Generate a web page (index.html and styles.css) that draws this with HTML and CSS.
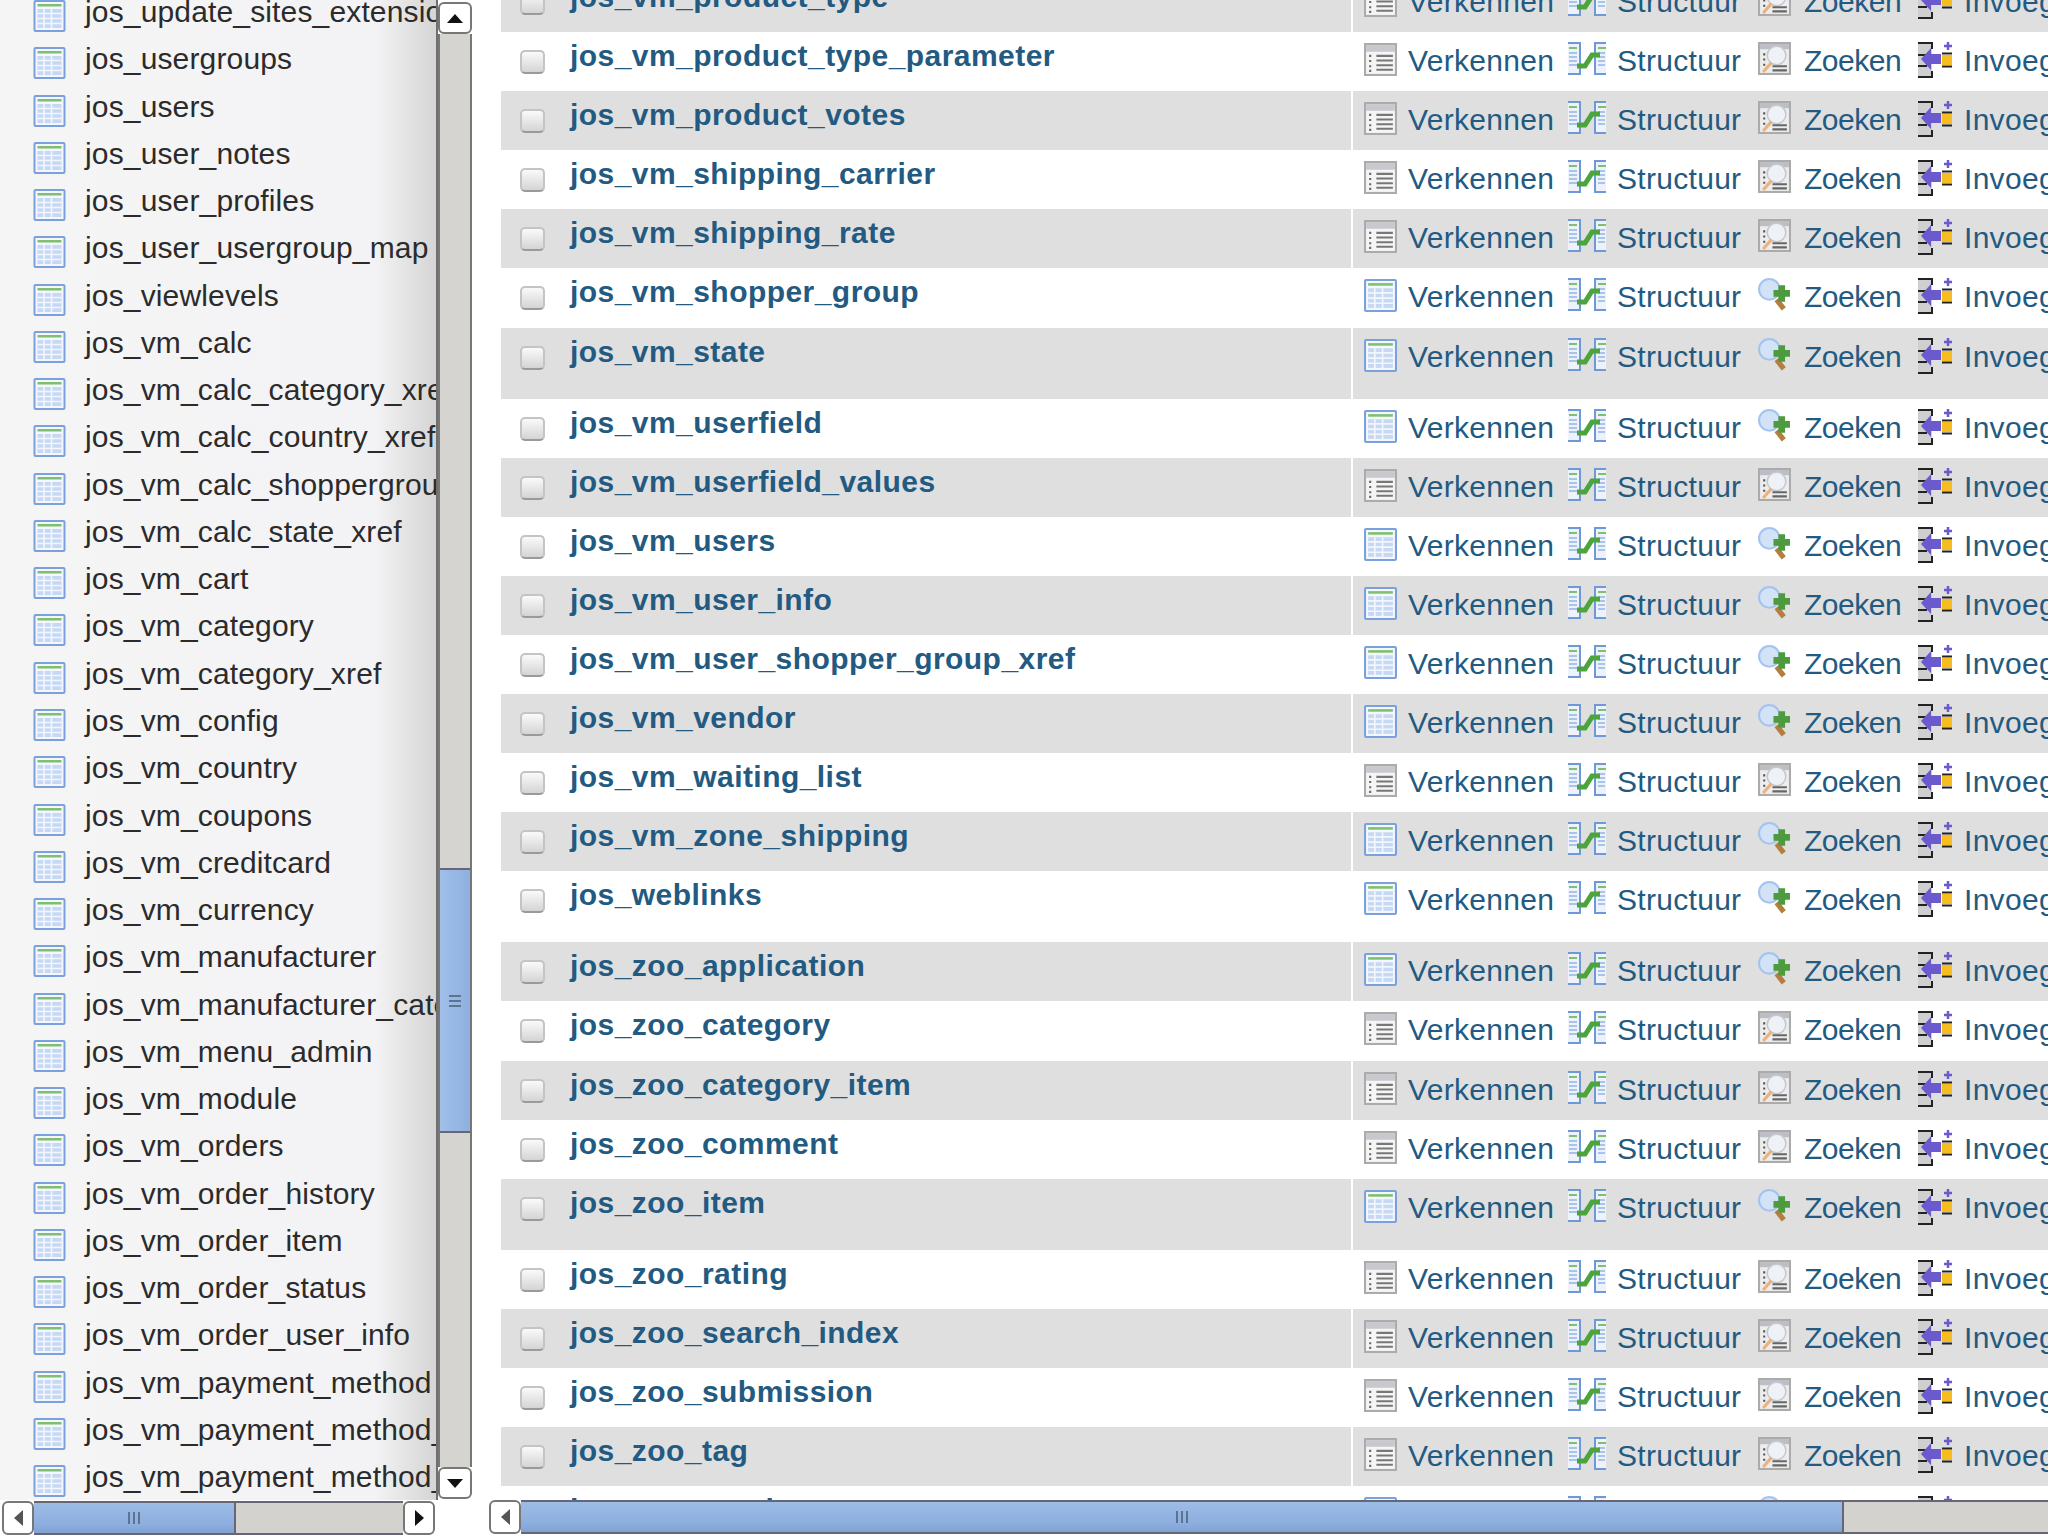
FILE: index.html
```html
<!DOCTYPE html>
<html lang="nl">
<head>
  <meta charset="UTF-8">
  <title>phpMyAdmin</title>
  <link rel="stylesheet" href="styles.css">
</head>
<body>
  <svg class="defs" width="0" height="0">
    <symbol id="i-table" viewBox="0 0 32 32">
      <rect x="1" y="1" width="30" height="30" rx="1" fill="#f4f7fd" stroke="#7ba1dc" stroke-width="2"/>
      <rect x="4" y="4" width="24" height="2.5" fill="#7fc06f"/>
      <rect x="4" y="9" width="24" height="19" fill="#c6d8f3"/>
      <path d="M4 13.500h24M4 18.500h24M4 23.500h24M10.500 9v19M18 9v19" stroke="#f2f6fd" stroke-width="1.600"/>
    </symbol>
    <symbol id="i-empty" viewBox="0 0 32 32">
      <rect x="1" y="1" width="30" height="30" fill="#f5f5f5" stroke="#ababab" stroke-width="2"/>
      <rect x="2" y="2" width="28" height="6.500" fill="#c8c8ce"/>
      <path d="M12 12.500h16M12 17h16M12 21.500h16M12 26h16" stroke="#777" stroke-width="2"/>
      <path d="M5 12.500h3M5 17.500h3M5 22.500h3M5 27h3" stroke="#666" stroke-width="2" stroke-dasharray="2 1"/>
    </symbol>
    <symbol id="i-struct" viewBox="0 0 38 33">
      <path d="M0 1h12v31H0M38 1H27v31h11" fill="#eef3fb" stroke="#6f98d8" stroke-width="2"/>
      <path d="M1 6h8M30 6h8" stroke="#7fc06f" stroke-width="2"/>
      <path d="M1 11h8M1 15h8M1 19h8M1 23h8M30 11h7M30 15h7M30 19h7M30 23h7" stroke="#a9c4ea" stroke-width="2"/>
      <path d="M9 24h8l7-11h8" fill="none" stroke="#4ba43c" stroke-width="5"/>
    </symbol>
    <symbol id="i-lens-grey" viewBox="0 0 32 32">
      <rect x="1" y="1" width="30" height="30" fill="#ededed" stroke="#ababab" stroke-width="2"/>
      <rect x="2" y="2" width="28" height="5" fill="#bdbdc4"/>
      <circle cx="18" cy="13" r="9" fill="#eef1f6" stroke="#c4c8d0" stroke-width="1.500"/>
      <path d="M13 20l-8 9" stroke="#eab27c" stroke-width="3"/>
      <path d="M14 23.500h14M14 27.500h14" stroke="#666" stroke-width="2"/>
      <path d="M5 12h3M5 17h3M5 22h3" stroke="#555" stroke-width="2" stroke-dasharray="2 1"/>
    </symbol>
    <symbol id="i-lens-add" viewBox="0 0 32 32">
      <circle cx="11" cy="11" r="10" fill="#d2e2f7" stroke="#a3c4ee" stroke-width="2"/>
      <path d="M18 21l7 9" stroke="#b57e3e" stroke-width="5"/>
      <path d="M23 7v16M15 15h16" stroke="#4d9b3e" stroke-width="6.500"/>
    </symbol>
    <symbol id="i-insert" viewBox="0 0 34 36">
      <rect x="0" y="1" width="14" height="34" fill="#cfcfcf"/>
      <path d="M0 1h14v6M14 29v6H0M0 13h9M0 24h9" fill="none" stroke="#222" stroke-width="2"/>
      <path d="M3 17l10-11v6h10v10H13v6z" fill="#6a5acd"/>
      <path d="M30 0v8M26 4h8" stroke="#6a5acd" stroke-width="2.500"/>
      <rect x="24" y="13" width="10" height="10" fill="#f5bd1f"/>
      <path d="M24 11.500h10M24 24.500h10" stroke="#222" stroke-width="2"/>
    </symbol>
  </svg>

  <div class="app">
    <div class="nav">
      <div class="nav-top">
        <ul class="nav-list">
          <li><svg class="ic"><use href="#i-table"/></svg><span>jos_update_sites_extensions</span></li>
          <li><svg class="ic"><use href="#i-table"/></svg><span>jos_usergroups</span></li>
          <li><svg class="ic"><use href="#i-table"/></svg><span>jos_users</span></li>
          <li><svg class="ic"><use href="#i-table"/></svg><span>jos_user_notes</span></li>
          <li><svg class="ic"><use href="#i-table"/></svg><span>jos_user_profiles</span></li>
          <li><svg class="ic"><use href="#i-table"/></svg><span>jos_user_usergroup_map</span></li>
          <li><svg class="ic"><use href="#i-table"/></svg><span>jos_viewlevels</span></li>
          <li><svg class="ic"><use href="#i-table"/></svg><span>jos_vm_calc</span></li>
          <li><svg class="ic"><use href="#i-table"/></svg><span>jos_vm_calc_category_xref</span></li>
          <li><svg class="ic"><use href="#i-table"/></svg><span>jos_vm_calc_country_xref</span></li>
          <li><svg class="ic"><use href="#i-table"/></svg><span>jos_vm_calc_shoppergroup_xref</span></li>
          <li><svg class="ic"><use href="#i-table"/></svg><span>jos_vm_calc_state_xref</span></li>
          <li><svg class="ic"><use href="#i-table"/></svg><span>jos_vm_cart</span></li>
          <li><svg class="ic"><use href="#i-table"/></svg><span>jos_vm_category</span></li>
          <li><svg class="ic"><use href="#i-table"/></svg><span>jos_vm_category_xref</span></li>
          <li><svg class="ic"><use href="#i-table"/></svg><span>jos_vm_config</span></li>
          <li><svg class="ic"><use href="#i-table"/></svg><span>jos_vm_country</span></li>
          <li><svg class="ic"><use href="#i-table"/></svg><span>jos_vm_coupons</span></li>
          <li><svg class="ic"><use href="#i-table"/></svg><span>jos_vm_creditcard</span></li>
          <li><svg class="ic"><use href="#i-table"/></svg><span>jos_vm_currency</span></li>
          <li><svg class="ic"><use href="#i-table"/></svg><span>jos_vm_manufacturer</span></li>
          <li><svg class="ic"><use href="#i-table"/></svg><span>jos_vm_manufacturer_category</span></li>
          <li><svg class="ic"><use href="#i-table"/></svg><span>jos_vm_menu_admin</span></li>
          <li><svg class="ic"><use href="#i-table"/></svg><span>jos_vm_module</span></li>
          <li><svg class="ic"><use href="#i-table"/></svg><span>jos_vm_orders</span></li>
          <li><svg class="ic"><use href="#i-table"/></svg><span>jos_vm_order_history</span></li>
          <li><svg class="ic"><use href="#i-table"/></svg><span>jos_vm_order_item</span></li>
          <li><svg class="ic"><use href="#i-table"/></svg><span>jos_vm_order_status</span></li>
          <li><svg class="ic"><use href="#i-table"/></svg><span>jos_vm_order_user_info</span></li>
          <li><svg class="ic"><use href="#i-table"/></svg><span>jos_vm_payment_method</span></li>
          <li><svg class="ic"><use href="#i-table"/></svg><span>jos_vm_payment_method_shoppergroup</span></li>
          <li><svg class="ic"><use href="#i-table"/></svg><span>jos_vm_payment_method_xref</span></li>
        </ul>
        <div class="vbar">
          <div class="sb-btn"><i class="arrow up"></i></div>
          <div class="vbar-track"><div class="vbar-gap"></div><div class="vbar-thumb"><i class="grip-h"></i></div><div class="vbar-rest"></div></div>
          <div class="sb-btn"><i class="arrow down"></i></div>
        </div>
      </div>
      <div class="hbar nav-hbar">
        <div class="sb-btn"><i class="arrow left"></i></div>
        <div class="hbar-thumb nav-thumb"><i class="grip-v"></i></div>
        <div class="hbar-rest"></div>
        <div class="sb-btn"><i class="arrow right"></i></div>
      </div>
    </div>

    <div class="main">
      <div class="view">
        <div class="rows">
          <div class="row odd"><div class="name"><input type="checkbox"><a href="#">jos_vm_product_type</a></div><div class="actions"><a href="#"><svg class="ic-t"><use href="#i-empty"/></svg>Verkennen</a><a href="#" class="st"><svg class="ic-s"><use href="#i-struct"/></svg>Structuur</a><a href="#" class="zk"><svg class="ic-z"><use href="#i-lens-grey"/></svg>Zoeken</a><a href="#"><svg class="ic-i"><use href="#i-insert"/></svg>Invoegen</a></div></div>
          <div class="row"><div class="name"><input type="checkbox"><a href="#">jos_vm_product_type_parameter</a></div><div class="actions"><a href="#"><svg class="ic-t"><use href="#i-empty"/></svg>Verkennen</a><a href="#" class="st"><svg class="ic-s"><use href="#i-struct"/></svg>Structuur</a><a href="#" class="zk"><svg class="ic-z"><use href="#i-lens-grey"/></svg>Zoeken</a><a href="#"><svg class="ic-i"><use href="#i-insert"/></svg>Invoegen</a></div></div>
          <div class="row odd"><div class="name"><input type="checkbox"><a href="#">jos_vm_product_votes</a></div><div class="actions"><a href="#"><svg class="ic-t"><use href="#i-empty"/></svg>Verkennen</a><a href="#" class="st"><svg class="ic-s"><use href="#i-struct"/></svg>Structuur</a><a href="#" class="zk"><svg class="ic-z"><use href="#i-lens-grey"/></svg>Zoeken</a><a href="#"><svg class="ic-i"><use href="#i-insert"/></svg>Invoegen</a></div></div>
          <div class="row"><div class="name"><input type="checkbox"><a href="#">jos_vm_shipping_carrier</a></div><div class="actions"><a href="#"><svg class="ic-t"><use href="#i-empty"/></svg>Verkennen</a><a href="#" class="st"><svg class="ic-s"><use href="#i-struct"/></svg>Structuur</a><a href="#" class="zk"><svg class="ic-z"><use href="#i-lens-grey"/></svg>Zoeken</a><a href="#"><svg class="ic-i"><use href="#i-insert"/></svg>Invoegen</a></div></div>
          <div class="row odd"><div class="name"><input type="checkbox"><a href="#">jos_vm_shipping_rate</a></div><div class="actions"><a href="#"><svg class="ic-t"><use href="#i-empty"/></svg>Verkennen</a><a href="#" class="st"><svg class="ic-s"><use href="#i-struct"/></svg>Structuur</a><a href="#" class="zk"><svg class="ic-z"><use href="#i-lens-grey"/></svg>Zoeken</a><a href="#"><svg class="ic-i"><use href="#i-insert"/></svg>Invoegen</a></div></div>
          <div class="row"><div class="name"><input type="checkbox"><a href="#">jos_vm_shopper_group</a></div><div class="actions"><a href="#"><svg class="ic-t"><use href="#i-table"/></svg>Verkennen</a><a href="#" class="st"><svg class="ic-s"><use href="#i-struct"/></svg>Structuur</a><a href="#" class="zk"><svg class="ic-z"><use href="#i-lens-add"/></svg>Zoeken</a><a href="#"><svg class="ic-i"><use href="#i-insert"/></svg>Invoegen</a></div></div>
          <div class="row odd tall"><div class="name"><input type="checkbox"><a href="#">jos_vm_state</a></div><div class="actions"><a href="#"><svg class="ic-t"><use href="#i-table"/></svg>Verkennen</a><a href="#" class="st"><svg class="ic-s"><use href="#i-struct"/></svg>Structuur</a><a href="#" class="zk"><svg class="ic-z"><use href="#i-lens-add"/></svg>Zoeken</a><a href="#"><svg class="ic-i"><use href="#i-insert"/></svg>Invoegen</a></div></div>
          <div class="row"><div class="name"><input type="checkbox"><a href="#">jos_vm_userfield</a></div><div class="actions"><a href="#"><svg class="ic-t"><use href="#i-table"/></svg>Verkennen</a><a href="#" class="st"><svg class="ic-s"><use href="#i-struct"/></svg>Structuur</a><a href="#" class="zk"><svg class="ic-z"><use href="#i-lens-add"/></svg>Zoeken</a><a href="#"><svg class="ic-i"><use href="#i-insert"/></svg>Invoegen</a></div></div>
          <div class="row odd"><div class="name"><input type="checkbox"><a href="#">jos_vm_userfield_values</a></div><div class="actions"><a href="#"><svg class="ic-t"><use href="#i-empty"/></svg>Verkennen</a><a href="#" class="st"><svg class="ic-s"><use href="#i-struct"/></svg>Structuur</a><a href="#" class="zk"><svg class="ic-z"><use href="#i-lens-grey"/></svg>Zoeken</a><a href="#"><svg class="ic-i"><use href="#i-insert"/></svg>Invoegen</a></div></div>
          <div class="row"><div class="name"><input type="checkbox"><a href="#">jos_vm_users</a></div><div class="actions"><a href="#"><svg class="ic-t"><use href="#i-table"/></svg>Verkennen</a><a href="#" class="st"><svg class="ic-s"><use href="#i-struct"/></svg>Structuur</a><a href="#" class="zk"><svg class="ic-z"><use href="#i-lens-add"/></svg>Zoeken</a><a href="#"><svg class="ic-i"><use href="#i-insert"/></svg>Invoegen</a></div></div>
          <div class="row odd"><div class="name"><input type="checkbox"><a href="#">jos_vm_user_info</a></div><div class="actions"><a href="#"><svg class="ic-t"><use href="#i-table"/></svg>Verkennen</a><a href="#" class="st"><svg class="ic-s"><use href="#i-struct"/></svg>Structuur</a><a href="#" class="zk"><svg class="ic-z"><use href="#i-lens-add"/></svg>Zoeken</a><a href="#"><svg class="ic-i"><use href="#i-insert"/></svg>Invoegen</a></div></div>
          <div class="row"><div class="name"><input type="checkbox"><a href="#">jos_vm_user_shopper_group_xref</a></div><div class="actions"><a href="#"><svg class="ic-t"><use href="#i-table"/></svg>Verkennen</a><a href="#" class="st"><svg class="ic-s"><use href="#i-struct"/></svg>Structuur</a><a href="#" class="zk"><svg class="ic-z"><use href="#i-lens-add"/></svg>Zoeken</a><a href="#"><svg class="ic-i"><use href="#i-insert"/></svg>Invoegen</a></div></div>
          <div class="row odd"><div class="name"><input type="checkbox"><a href="#">jos_vm_vendor</a></div><div class="actions"><a href="#"><svg class="ic-t"><use href="#i-table"/></svg>Verkennen</a><a href="#" class="st"><svg class="ic-s"><use href="#i-struct"/></svg>Structuur</a><a href="#" class="zk"><svg class="ic-z"><use href="#i-lens-add"/></svg>Zoeken</a><a href="#"><svg class="ic-i"><use href="#i-insert"/></svg>Invoegen</a></div></div>
          <div class="row"><div class="name"><input type="checkbox"><a href="#">jos_vm_waiting_list</a></div><div class="actions"><a href="#"><svg class="ic-t"><use href="#i-empty"/></svg>Verkennen</a><a href="#" class="st"><svg class="ic-s"><use href="#i-struct"/></svg>Structuur</a><a href="#" class="zk"><svg class="ic-z"><use href="#i-lens-grey"/></svg>Zoeken</a><a href="#"><svg class="ic-i"><use href="#i-insert"/></svg>Invoegen</a></div></div>
          <div class="row odd"><div class="name"><input type="checkbox"><a href="#">jos_vm_zone_shipping</a></div><div class="actions"><a href="#"><svg class="ic-t"><use href="#i-table"/></svg>Verkennen</a><a href="#" class="st"><svg class="ic-s"><use href="#i-struct"/></svg>Structuur</a><a href="#" class="zk"><svg class="ic-z"><use href="#i-lens-add"/></svg>Zoeken</a><a href="#"><svg class="ic-i"><use href="#i-insert"/></svg>Invoegen</a></div></div>
          <div class="row tall"><div class="name"><input type="checkbox"><a href="#">jos_weblinks</a></div><div class="actions"><a href="#"><svg class="ic-t"><use href="#i-table"/></svg>Verkennen</a><a href="#" class="st"><svg class="ic-s"><use href="#i-struct"/></svg>Structuur</a><a href="#" class="zk"><svg class="ic-z"><use href="#i-lens-add"/></svg>Zoeken</a><a href="#"><svg class="ic-i"><use href="#i-insert"/></svg>Invoegen</a></div></div>
          <div class="row odd"><div class="name"><input type="checkbox"><a href="#">jos_zoo_application</a></div><div class="actions"><a href="#"><svg class="ic-t"><use href="#i-table"/></svg>Verkennen</a><a href="#" class="st"><svg class="ic-s"><use href="#i-struct"/></svg>Structuur</a><a href="#" class="zk"><svg class="ic-z"><use href="#i-lens-add"/></svg>Zoeken</a><a href="#"><svg class="ic-i"><use href="#i-insert"/></svg>Invoegen</a></div></div>
          <div class="row"><div class="name"><input type="checkbox"><a href="#">jos_zoo_category</a></div><div class="actions"><a href="#"><svg class="ic-t"><use href="#i-empty"/></svg>Verkennen</a><a href="#" class="st"><svg class="ic-s"><use href="#i-struct"/></svg>Structuur</a><a href="#" class="zk"><svg class="ic-z"><use href="#i-lens-grey"/></svg>Zoeken</a><a href="#"><svg class="ic-i"><use href="#i-insert"/></svg>Invoegen</a></div></div>
          <div class="row odd"><div class="name"><input type="checkbox"><a href="#">jos_zoo_category_item</a></div><div class="actions"><a href="#"><svg class="ic-t"><use href="#i-empty"/></svg>Verkennen</a><a href="#" class="st"><svg class="ic-s"><use href="#i-struct"/></svg>Structuur</a><a href="#" class="zk"><svg class="ic-z"><use href="#i-lens-grey"/></svg>Zoeken</a><a href="#"><svg class="ic-i"><use href="#i-insert"/></svg>Invoegen</a></div></div>
          <div class="row"><div class="name"><input type="checkbox"><a href="#">jos_zoo_comment</a></div><div class="actions"><a href="#"><svg class="ic-t"><use href="#i-empty"/></svg>Verkennen</a><a href="#" class="st"><svg class="ic-s"><use href="#i-struct"/></svg>Structuur</a><a href="#" class="zk"><svg class="ic-z"><use href="#i-lens-grey"/></svg>Zoeken</a><a href="#"><svg class="ic-i"><use href="#i-insert"/></svg>Invoegen</a></div></div>
          <div class="row odd tall"><div class="name"><input type="checkbox"><a href="#">jos_zoo_item</a></div><div class="actions"><a href="#"><svg class="ic-t"><use href="#i-table"/></svg>Verkennen</a><a href="#" class="st"><svg class="ic-s"><use href="#i-struct"/></svg>Structuur</a><a href="#" class="zk"><svg class="ic-z"><use href="#i-lens-add"/></svg>Zoeken</a><a href="#"><svg class="ic-i"><use href="#i-insert"/></svg>Invoegen</a></div></div>
          <div class="row"><div class="name"><input type="checkbox"><a href="#">jos_zoo_rating</a></div><div class="actions"><a href="#"><svg class="ic-t"><use href="#i-empty"/></svg>Verkennen</a><a href="#" class="st"><svg class="ic-s"><use href="#i-struct"/></svg>Structuur</a><a href="#" class="zk"><svg class="ic-z"><use href="#i-lens-grey"/></svg>Zoeken</a><a href="#"><svg class="ic-i"><use href="#i-insert"/></svg>Invoegen</a></div></div>
          <div class="row odd"><div class="name"><input type="checkbox"><a href="#">jos_zoo_search_index</a></div><div class="actions"><a href="#"><svg class="ic-t"><use href="#i-empty"/></svg>Verkennen</a><a href="#" class="st"><svg class="ic-s"><use href="#i-struct"/></svg>Structuur</a><a href="#" class="zk"><svg class="ic-z"><use href="#i-lens-grey"/></svg>Zoeken</a><a href="#"><svg class="ic-i"><use href="#i-insert"/></svg>Invoegen</a></div></div>
          <div class="row"><div class="name"><input type="checkbox"><a href="#">jos_zoo_submission</a></div><div class="actions"><a href="#"><svg class="ic-t"><use href="#i-empty"/></svg>Verkennen</a><a href="#" class="st"><svg class="ic-s"><use href="#i-struct"/></svg>Structuur</a><a href="#" class="zk"><svg class="ic-z"><use href="#i-lens-grey"/></svg>Zoeken</a><a href="#"><svg class="ic-i"><use href="#i-insert"/></svg>Invoegen</a></div></div>
          <div class="row odd"><div class="name"><input type="checkbox"><a href="#">jos_zoo_tag</a></div><div class="actions"><a href="#"><svg class="ic-t"><use href="#i-empty"/></svg>Verkennen</a><a href="#" class="st"><svg class="ic-s"><use href="#i-struct"/></svg>Structuur</a><a href="#" class="zk"><svg class="ic-z"><use href="#i-lens-grey"/></svg>Zoeken</a><a href="#"><svg class="ic-i"><use href="#i-insert"/></svg>Invoegen</a></div></div>
          <div class="row"><div class="name"><input type="checkbox"><a href="#">jos_zoo_version</a></div><div class="actions"><a href="#"><svg class="ic-t"><use href="#i-table"/></svg>Verkennen</a><a href="#" class="st"><svg class="ic-s"><use href="#i-struct"/></svg>Structuur</a><a href="#" class="zk"><svg class="ic-z"><use href="#i-lens-add"/></svg>Zoeken</a><a href="#"><svg class="ic-i"><use href="#i-insert"/></svg>Invoegen</a></div></div>
        </div>
      </div>
      <div class="hbar">
        <div class="sb-btn"><i class="arrow left"></i></div>
        <div class="hbar-thumb main-thumb"><i class="grip-v"></i></div>
        <div class="hbar-rest"></div>
      </div>
    </div>
  </div>
</body>
</html>
```

FILE: styles.css
```css
* {
  box-sizing: border-box;
}
html, body {
  margin: 0;
  height: 100%;
  overflow: hidden;
  background: #fff;
}
body {
  font-family: "Liberation Sans", Arial, sans-serif;
  font-size: 30px;
}
.defs {
  position: absolute;
}
.app {
  display: flex;
  height: 1535px;
}

/* left navigation */
.nav {
  width: 472px;
  flex: none;
  display: flex;
  flex-direction: column;
}
.nav-top {
  display: flex;
  height: 1500px;
}
.nav-list {
  width: 438px;
  margin: 0;
  padding: 0;
  list-style: none;
  overflow: hidden;
  color: #2b2b2b;
  background: linear-gradient(to right, #f5f5f5 0, #f3f3f5 86%, #d6d6d6 99.5%);
  border-right: 2px solid #6f6f6f;
}
.nav-list li {
  display: flex;
  height: 47.27px;
  padding-left: 33px;
  white-space: nowrap;
  line-height: 24px;
  letter-spacing: 0.15px;
}
.nav-list span {
  margin-left: 19px;
}
.ic {
  width: 33px;
  height: 32px;
  flex: none;
}

/* scrollbars */
.vbar {
  width: 34px;
  flex: none;
  display: flex;
  flex-direction: column;
  padding: 2px 0 1px;
}
.vbar-track {
  flex: 1;
  display: flex;
  flex-direction: column;
  background: #d5d4d1;
  border-left: 2px solid #777;
  border-right: 2px solid #777;
}
.vbar-gap {
  height: 834px;
}
.vbar-thumb {
  height: 265px;
  display: flex;
  align-items: center;
  justify-content: center;
  background: linear-gradient(to right, #a0bfe9, #8fb0df);
  border-top: 2px solid #667;
  border-bottom: 2px solid #667;
}
.vbar-rest {
  flex: 1;
}
.sb-btn {
  width: 34px;
  height: 32px;
  flex: none;
  display: flex;
  align-items: center;
  justify-content: center;
  background: #fff;
  border: 2px solid #777;
  border-radius: 6px;
}
.arrow {
  width: 0;
  height: 0;
  border-style: solid;
  border-color: transparent;
}
.arrow.up {
  border-width: 0 8px 9px;
  border-bottom-color: #111;
}
.arrow.down {
  border-width: 9px 8px 0;
  border-top-color: #111;
}
.arrow.left {
  border-width: 8px 9px 8px 0;
  border-right-color: #555;
}
.arrow.right {
  border-width: 8px 0 8px 9px;
  border-left-color: #111;
}
.grip-h {
  width: 12px;
  height: 12px;
  border-top: 2px solid #5c7392;
  border-bottom: 2px solid #5c7392;
  background: linear-gradient(#5c7392, #5c7392) center / 100% 2px no-repeat;
}
.grip-v {
  width: 12px;
  height: 12px;
  border-left: 2px solid #5c7392;
  border-right: 2px solid #5c7392;
  background: linear-gradient(#5c7392, #5c7392) center / 2px 100% no-repeat;
}
.hbar {
  height: 34px;
  flex: none;
  display: flex;
}
.nav-hbar {
  width: 433px;
  margin: 1px 0 0 2px;
}
.hbar-thumb {
  display: flex;
  align-items: center;
  justify-content: center;
  background: linear-gradient(#9dbce6, #8dafdf 70%, #80a2d2);
  border-top: 2px solid #667;
  border-bottom: 2px solid #667;
  border-right: 2px solid #667;
}
.nav-thumb {
  width: 202px;
}
.main-thumb {
  width: 1323px;
}
.hbar-rest {
  flex: 1;
  background: #d3d2cf;
  border-top: 2px solid #667;
  border-bottom: 2px solid #667;
}
.hbar .sb-btn {
  width: 32px;
  height: 34px;
}

/* table list */
.main {
  flex: 1;
  min-width: 0;
  display: flex;
  flex-direction: column;
  padding-left: 17px;
}
.view {
  height: 1500px;
  padding-left: 12px;
  overflow: hidden;
}
.rows {
  margin-top: -27px;
}
.row {
  display: flex;
  height: 59.1px;
  background: #fff;
}
.row.tall {
  height: 71px;
}
.name {
  width: 850px;
  flex: none;
  display: flex;
  padding-left: 19px;
  font-weight: bold;
  letter-spacing: 0.45px;
}
.name input {
  appearance: none;
  width: 25px;
  height: 24px;
  margin: 18px 25px 0 0;
  flex: none;
  border: 2px solid #c4c4c4;
  border-bottom-color: #9a9a9a;
  border-radius: 5px;
  background: linear-gradient(#fafafa, #d4d4d4);
}
.name a {
  padding-top: 6px;
  line-height: 36px;
}
.actions {
  flex: 1;
  min-width: 0;
  margin-left: 2px;
  padding: 10px 0 0 11px;
  display: grid;
  grid-template-columns: 204px 190px 160px 1fr;
  overflow: hidden;
}
.row.odd .name, .row.odd .actions {
  background: #dfdfdf;
}
.row a {
  color: #235a81;
  text-decoration: none;
  white-space: nowrap;
}
.actions a {
  display: flex;
  align-items: flex-start;
  line-height: 37px;
  letter-spacing: 0.3px;
}
.actions a.zk {
  letter-spacing: -0.5px;
}
.ic-t {
  width: 33px;
  height: 33px;
  margin: 1px 11px 0 0;
  flex: none;
}
.ic-s {
  width: 38px;
  height: 33px;
  margin-right: 11px;
  flex: none;
}
.ic-z {
  width: 33px;
  height: 33px;
  margin-right: 13px;
  flex: none;
}
.ic-i {
  width: 34px;
  height: 36px;
  margin-right: 12px;
  flex: none;
}
```
